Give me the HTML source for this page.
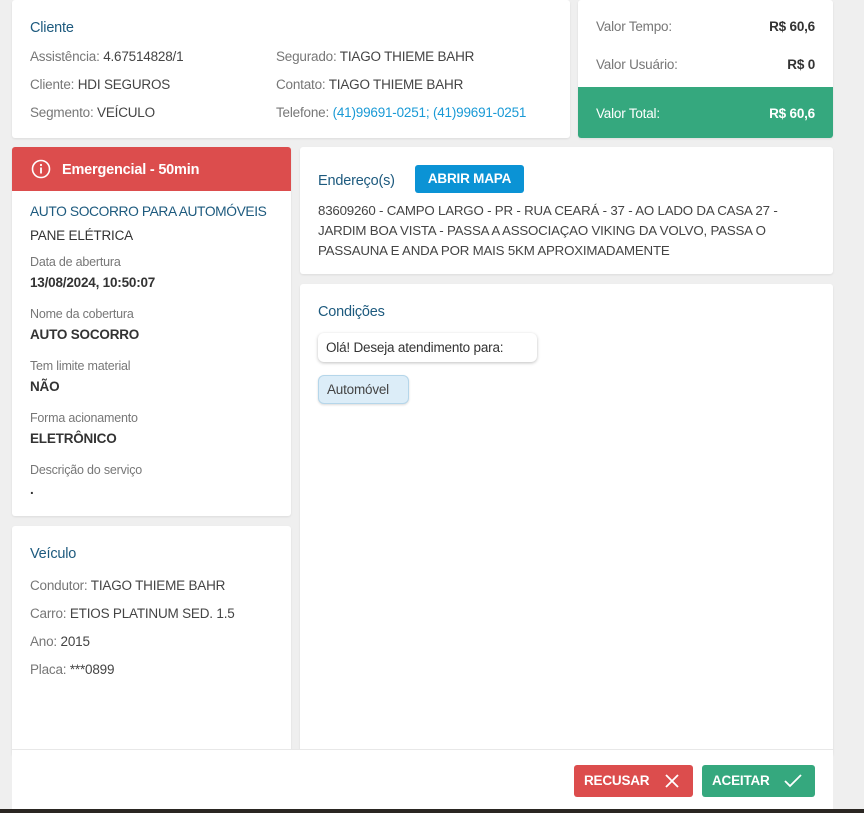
<!DOCTYPE html>
<html><head><meta charset="utf-8"><style>
*{box-sizing:border-box;margin:0;padding:0}
body{width:864px;height:813px;background:#efefef;font-family:"Liberation Sans",sans-serif;font-size:13.5px;color:#444;position:relative;overflow:hidden;letter-spacing:-0.2px}
.card{position:absolute;background:#fff;border-radius:3px;box-shadow:0 1px 2px rgba(0,0,0,.08)}
.t{color:#1d5a7e;font-size:14.5px}
.g{color:#777}
.abs{position:absolute;white-space:nowrap}
.lbl{font-size:12.5px;color:#777}
.val{font-size:13.5px;color:#333;font-weight:bold}
</style></head><body>
<div class="card" style="left:12px;top:0;width:558px;height:138px">
 <div class="abs t" style="left:18px;top:20px">Cliente</div>
 <div class="abs" style="left:18px;top:49px"><span class="g">Assistência:</span> 4.67514828/1</div>
 <div class="abs" style="left:18px;top:77px"><span class="g">Cliente:</span> HDI SEGUROS</div>
 <div class="abs" style="left:18px;top:105px"><span class="g">Segmento:</span> VEÍCULO</div>
 <div class="abs" style="left:264px;top:49px"><span class="g">Segurado:</span> TIAGO THIEME BAHR</div>
 <div class="abs" style="left:264px;top:77px"><span class="g">Contato:</span> TIAGO THIEME BAHR</div>
 <div class="abs" style="left:264px;top:105px"><span class="g">Telefone:</span> <span style="color:#1a9ad6">(41)99691-0251; (41)99691-0251</span></div>
</div>
<div class="card" style="left:578px;top:0;width:255px;height:138px;overflow:hidden">
 <div class="abs g" style="left:18px;top:19px">Valor Tempo:</div>
 <div class="abs" style="right:18px;top:19px;font-weight:bold;color:#333">R$ 60,6</div>
 <div class="abs g" style="left:18px;top:57px">Valor Usuário:</div>
 <div class="abs" style="right:18px;top:57px;font-weight:bold;color:#333">R$ 0</div>
 <div style="position:absolute;left:0;top:87px;width:255px;height:51px;background:#35a87e;color:#fff">
  <div class="abs" style="left:18px;top:19px">Valor Total:</div>
  <div class="abs" style="right:18px;top:19px;font-weight:bold">R$ 60,6</div>
 </div>
</div>
<div class="card" style="left:12px;top:147px;width:279px;height:369px;overflow:hidden">
 <div style="height:44px;background:#dc4d4d;color:#fff;font-weight:bold;font-size:14.5px;padding:15px 0 0 50px;position:relative">Emergencial - 50min
  <svg style="position:absolute;left:19px;top:12px" width="20" height="20" viewBox="0 0 20 20"><circle cx="10" cy="10" r="8.5" fill="none" stroke="#fff" stroke-width="1.6"/><rect x="9.1" y="8.5" width="1.8" height="6" fill="#fff"/><circle cx="10" cy="6" r="1.1" fill="#fff"/></svg></div>
 <div class="abs t" style="left:18px;top:57px;font-size:13.8px;letter-spacing:-0.4px">AUTO SOCORRO PARA AUTOMÓVEIS</div>
 <div class="abs" style="left:18px;top:81px;color:#333">PANE ELÉTRICA</div>
 <div class="abs lbl" style="left:18px;top:108px">Data de abertura</div>
 <div class="abs val" style="left:18px;top:128px">13/08/2024, 10:50:07</div>
 <div class="abs lbl" style="left:18px;top:160px">Nome da cobertura</div>
 <div class="abs val" style="left:18px;top:180px">AUTO SOCORRO</div>
 <div class="abs lbl" style="left:18px;top:212px">Tem limite material</div>
 <div class="abs val" style="left:18px;top:232px">NÃO</div>
 <div class="abs lbl" style="left:18px;top:264px">Forma acionamento</div>
 <div class="abs val" style="left:18px;top:284px">ELETRÔNICO</div>
 <div class="abs lbl" style="left:18px;top:316px">Descrição do serviço</div>
 <div class="abs val" style="left:18px;top:335px">.</div>
</div>
<div class="card" style="left:12px;top:526px;width:279px;height:230px">
 <div class="abs t" style="left:18px;top:20px">Veículo</div>
 <div class="abs" style="left:18px;top:52px"><span class="g">Condutor:</span> TIAGO THIEME BAHR</div>
 <div class="abs" style="left:18px;top:80px"><span class="g">Carro:</span> ETIOS PLATINUM SED. 1.5</div>
 <div class="abs" style="left:18px;top:108px"><span class="g">Ano:</span> 2015</div>
 <div class="abs" style="left:18px;top:136px"><span class="g">Placa:</span> ***0899</div>
</div>
<div class="card" style="left:300px;top:147px;width:533px;height:127px">
 <div class="abs t" style="left:18px;top:26px">Endereço(s)</div>
 <div class="abs" style="left:115px;top:18px;width:109px;height:28px;background:#0b93d5;color:#fff;font-weight:bold;border-radius:3px;text-align:center;line-height:28px;font-size:13.5px">ABRIR MAPA</div>
 <div style="position:absolute;left:18px;top:54px;width:490px;line-height:20px;font-size:13.3px;color:#444">83609260 - CAMPO LARGO - PR - RUA CEARÁ - 37 - AO LADO DA CASA 27 - JARDIM BOA VISTA - PASSA A ASSOCIAÇAO VIKING DA VOLVO, PASSA O PASSAUNA E ANDA POR MAIS 5KM APROXIMADAMENTE</div>
</div>
<div class="card" style="left:300px;top:284px;width:533px;height:472px">
 <div class="abs t" style="left:18px;top:20px">Condições</div>
 <div class="abs" style="left:18px;top:49px;height:29px;width:219px;border-radius:6px;box-shadow:0 1px 3px rgba(0,0,0,.25);padding:7px 8px;color:#333">Olá! Deseja atendimento para:</div>
 <div class="abs" style="left:18px;top:91px;height:29px;width:91px;border-radius:6px;background:#dcedf8;border:1px solid #b5d6ea;box-shadow:0 1px 2px rgba(0,0,0,.15);padding:6px 8px;color:#444">Automóvel</div>
</div>
<div style="position:absolute;left:12px;top:749px;width:821px;height:60px;background:#fff;border-top:1px solid #e8e8e8">
 <div class="abs" style="left:562px;top:15px;width:119px;height:32px;background:#dc4d4d;border-radius:3px;color:#fff;font-weight:bold;line-height:32px;padding-left:10px">RECUSAR
  <svg style="position:absolute;left:90px;top:8px" width="16" height="16" viewBox="0 0 16 16"><path d="M2 2L14 14M14 2L2 14" stroke="#fff" stroke-width="1.8"/></svg></div>
 <div class="abs" style="left:690px;top:15px;width:113px;height:32px;background:#35a87e;border-radius:3px;color:#fff;font-weight:bold;line-height:32px;padding-left:10px">ACEITAR
  <svg style="position:absolute;left:82px;top:8px" width="18" height="16" viewBox="0 0 18 16"><path d="M1 8L6 13L17 2" fill="none" stroke="#fff" stroke-width="1.8"/></svg></div>
</div>
<div style="position:absolute;left:0;top:809px;width:864px;height:4px;background:#2a2622"></div>
</body></html>
